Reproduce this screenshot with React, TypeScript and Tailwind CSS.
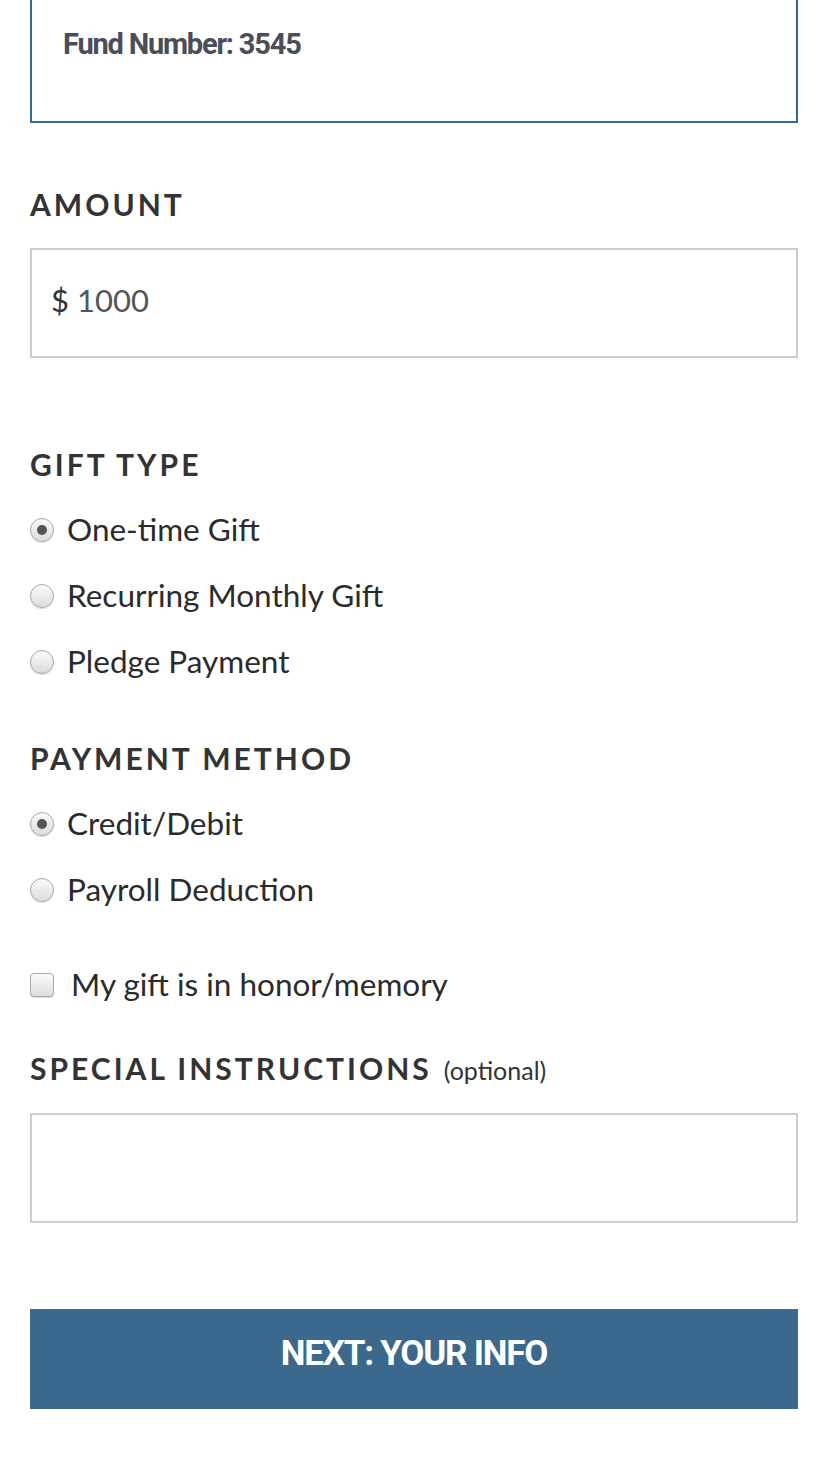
import React from "react";

function Radio({ checked }: { checked?: boolean }) {
  return (
    <span className="relative flex h-[24px] w-[24px] shrink-0 items-center justify-center rounded-full border border-[#a9a9a9] bg-gradient-to-b from-[#fbfbfb] to-[#dcdcdc] shadow-[0_1px_1px_rgba(0,0,0,0.15)]">
      {checked && <span className="h-[10px] w-[10px] rounded-full bg-[#555]" />}
    </span>
  );
}

function Option({ label, checked }: { label: string; checked?: boolean }) {
  return (
    <label className="flex h-[66px] items-center gap-[13px] text-[31.5px] text-[#2b2b2b]">
      <Radio checked={checked} />
      <span>{label}</span>
    </label>
  );
}

function Heading({ children }: { children: React.ReactNode }) {
  return (
    <h2 className="text-[30px] leading-[36px] font-bold tracking-[3px] text-[#333]">
      {children}
    </h2>
  );
}

export default function App() {
  return (
    <div className="min-h-[1467px] bg-white pl-[30px] pr-[28px] font-['Lato',sans-serif]">
      {/* Fund box, its top edge is scrolled off */}
      <div className="h-[123px] border-x-2 border-b-2 border-[#2f6b94] pl-[31px] pt-[26px]">
        <p className="font-['Roboto',sans-serif] text-[29px] leading-[36px] font-bold tracking-[-1.2px] text-[#4b4e5a]">
          Fund Number: 3545
        </p>
      </div>

      <div className="mt-[63px]">
        <Heading>AMOUNT</Heading>
      </div>
      <div className="mt-[26px] flex h-[110px] items-center border-2 border-[#cccccc] px-[19px] pb-[6px] text-[31px]">
        <span className="text-[#333]">$</span>
        <span className="ml-[8px] text-[#555]">1000</span>
      </div>

      <div className="mt-[88px]">
        <Heading>GIFT TYPE</Heading>
      </div>
      <div className="mt-[15px]">
        <Option label="One-time Gift" checked />
        <Option label="Recurring Monthly Gift" />
        <Option label="Pledge Payment" />
      </div>

      <div className="mt-[45px]">
        <Heading>PAYMENT METHOD</Heading>
      </div>
      <div className="mt-[15px]">
        <Option label="Credit/Debit" checked />
        <Option label="Payroll Deduction" />
      </div>

      <label className="mt-[29px] flex h-[66px] items-center gap-[17px] text-[31.5px] text-[#2b2b2b]">
        <span className="h-[24px] w-[24px] shrink-0 rounded-[4px] border border-[#a9a9a9] bg-gradient-to-b from-[#fbfbfb] to-[#dcdcdc] shadow-[0_1px_1px_rgba(0,0,0,0.15)]" />
        <span>My gift is in honor/memory</span>
      </label>

      <div className="mt-[32px] flex items-baseline gap-[12px]">
        <Heading>SPECIAL INSTRUCTIONS</Heading>
        <span className="text-[25px] text-[#333]">(optional)</span>
      </div>
      <div className="mt-[23px] h-[110px] border-2 border-[#cccccc]" />

      <button className="mt-[86px] flex h-[100px] w-full items-center justify-center bg-[#3b688d] pb-[8px] font-['Roboto',sans-serif] text-[35px] font-bold tracking-[-1.2px] text-white">
        NEXT: YOUR INFO
      </button>
    </div>
  );
}
